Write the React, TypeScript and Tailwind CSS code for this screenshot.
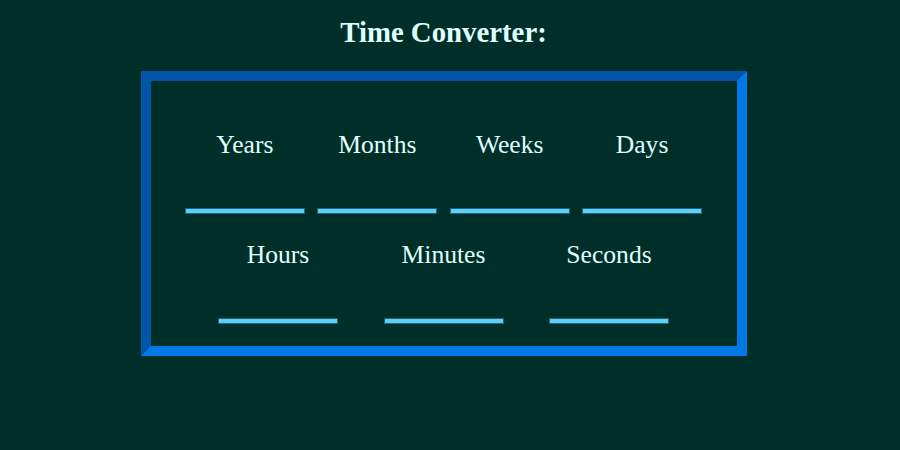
import React from "react";

const serif = { fontFamily: '"Liberation Serif", "Times New Roman", serif' };

function Field({ label }: { label: string }) {
  return (
    <div className="flex w-[118px] flex-col items-center">
      <div className="text-[25.6px] leading-[30px] text-[#e0ffff] whitespace-nowrap">{label}</div>
      <div className="mt-[49px] h-[4px] w-[118px] bg-[#5ccffa] shadow-[0_0_0_1px_rgba(92,207,250,0.35)]" />
    </div>
  );
}

export default function App() {
  return (
    <div className="min-h-[450px] w-full bg-[#002f29]" style={serif}>
      <div className="w-[887px] pt-[16px]">
        <h1 className="text-center text-[28.8px] font-bold leading-[33px] text-[#e0ffff]">Time Converter:</h1>
        <div className="mx-auto mt-[22px] h-[285px] w-[606px] border-[10px] border-solid border-t-[#0055a8] border-l-[#0055a8] border-b-[#0078e8] border-r-[#0078e8] pt-[49px]">
          <div className="mx-auto flex w-[544px] justify-evenly">
            <Field label="Years" />
            <Field label="Months" />
            <Field label="Weeks" />
            <Field label="Days" />
          </div>
          <div className="mx-auto mt-[26.5px] flex w-[544px] justify-evenly">
            <Field label="Hours" />
            <Field label="Minutes" />
            <Field label="Seconds" />
          </div>
        </div>
      </div>
    </div>
  );
}
